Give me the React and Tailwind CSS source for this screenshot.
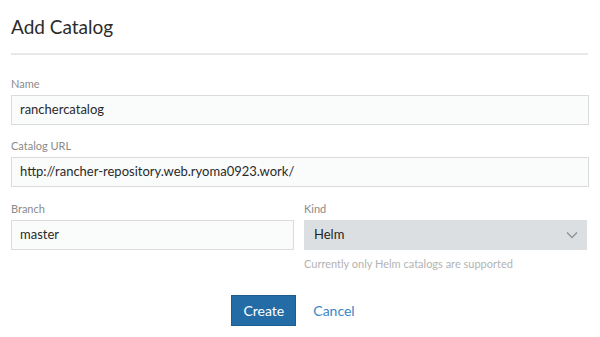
function Field({ label, children, className = '' }) {
  return (
    <div className={`flex flex-col ${className}`}>
      <label className="h-[13px] text-[11px] leading-[13px] text-[#8a8a8a]">{label}</label>
      <div className="mt-[5px]">{children}</div>
    </div>
  )
}

function TextBox({ value }) {
  return (
    <div className="flex h-[30px] items-center border border-[#dcdcdc] bg-[#fafbfb] px-[8px] text-[13px] text-[#2a2a2a]">
      {value}
    </div>
  )
}

export default function App() {
  return (
    <div className="h-[337px] w-[600px] overflow-hidden bg-white font-['Lato','Liberation_Sans',sans-serif]">
      <div className="px-[11px] pt-[15px]">
        <h1 className="text-[19px] leading-[24px] text-[#2b2b2b]">Add Catalog</h1>
        <div className="mt-[14px] mr-[1px] h-[2px] bg-[#e8e8e8]" />

        <Field label="Name" className="mt-[22px]">
          <TextBox value="ranchercatalog" />
        </Field>

        <Field label="Catalog URL" className="mt-[14px]">
          <TextBox value="http://rancher-repository.web.ryoma0923.work/" />
        </Field>

        <div className="mt-[15px] grid grid-cols-2 gap-[10px] pr-[2px]">
          <Field label="Branch">
            <TextBox value="master" />
          </Field>
          <div className="flex flex-col">
            <Field label="Kind">
              <div className="flex h-[30px] items-center justify-between bg-[#dcdfe1] pl-[10px] pr-[8px] text-[13px] text-[#1f1f1f]">
                <span>Helm</span>
                <svg width="14" height="14" viewBox="0 0 14 14" fill="none" stroke="#8e9399" strokeWidth="1.3">
                  <path d="M2 4.5l5 5 5-5" />
                </svg>
              </div>
            </Field>
            <p className="mt-[7px] text-[11px] leading-[13px] text-[#b3b3b3]">Currently only Helm catalogs are supported</p>
          </div>
        </div>

        <div className="mt-[25px] flex items-center justify-center gap-[17px] pr-[14px]">
          <button className="h-[31px] w-[65px] border border-[#1c5e92] bg-[#236ca6] text-[14px] text-white">Create</button>
          <button className="text-[14px] text-[#3a86c8]">Cancel</button>
        </div>
      </div>
    </div>
  )
}
